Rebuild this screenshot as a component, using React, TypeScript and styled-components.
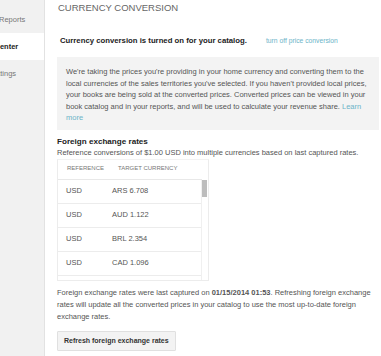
import React from 'react'
import styled, { createGlobalStyle } from 'styled-components'

type Rate = { code: string; value: string }

const rates: Rate[] = [
  { code: 'ARS', value: '6.708' },
  { code: 'AUD', value: '1.122' },
  { code: 'BRL', value: '2.354' },
  { code: 'CAD', value: '1.096' },
  { code: 'CHF', value: '0.908' },
  { code: 'CLP', value: '533.1' },
  { code: 'CNY', value: '6.051' },
  { code: 'COP', value: '1937' },
  { code: 'CZK', value: '20.14' },
  { code: 'DKK', value: '5.480' },
  { code: 'EUR', value: '0.735' },
  { code: 'GBP', value: '0.609' },
  { code: 'HKD', value: '7.755' },
  { code: 'HUF', value: '219.4' },
  { code: 'INR', value: '61.52' },
  { code: 'JPY', value: '104.5' },
  { code: 'KRW', value: '1062' },
  { code: 'MXN', value: '13.15' },
  { code: 'NOK', value: '6.152' },
  { code: 'NZD', value: '1.199' },
  { code: 'PLN', value: '3.064' },
  { code: 'RUB', value: '33.30' },
  { code: 'SEK', value: '6.500' },
  { code: 'TWD', value: '30.07' },
  { code: 'ZAR', value: '10.90' },
]

const GlobalStyle = createGlobalStyle`
  html, body {
    margin: 0;
    padding: 0;
    background: #fff;
  }
  body {
    font-family: "Liberation Sans", Arial, sans-serif;
    color: #444;
  }
`

const App = () => {
  return (
    <Page>
      <GlobalStyle />
      <Sidebar>
        <NavItem><NavLabel $shift={-1}>Reports</NavLabel></NavItem>
        <NavItem $active><NavLabel $shift={-5.5}>Center</NavLabel></NavItem>
        <NavItem><NavLabel $shift={-11}>Settings</NavLabel></NavItem>
      </Sidebar>
      <Main>
        <Title>CURRENCY CONVERSION</Title>
        <StatusRow>
          <Strong>Currency conversion is turned on for your catalog.</Strong>
          <SmallLink href="#">turn off price conversion</SmallLink>
        </StatusRow>
        <InfoBox>
          We're taking the prices you're providing in your home currency and converting them to the
          local currencies of the sales territories you've selected. If you haven't provided local prices,
          your books are being sold at the converted prices. Converted prices can be viewed in your
          book catalog and in your reports, and will be used to calculate your revenue share.{' '}
          <Link href="#">Learn more</Link>
        </InfoBox>
        <SectionTitle>Foreign exchange rates</SectionTitle>
        <Text>Reference conversions of $1.00 USD into multiple currencies based on last captured rates.</Text>
        <RatesBox>
          <HeadRow>
            <HeadCell $width={51}>REFERENCE</HeadCell>
            <HeadCell>TARGET CURRENCY</HeadCell>
          </HeadRow>
          <RowsScroll>
            {rates.map(r => (
              <RateRow key={r.code}>
                <Cell $width={46}>USD</Cell>
                <Cell>{r.code} {r.value}</Cell>
              </RateRow>
            ))}
          </RowsScroll>
          <ScrollThumb />
        </RatesBox>
        <Note>
          Foreign exchange rates were last captured on <b>01/15/2014 01:53</b>. Refreshing foreign exchange
          rates will update all the converted prices in your catalog to use the most up-to-date foreign
          exchange rates.
        </Note>
        <Button>Refresh foreign exchange rates</Button>
      </Main>
    </Page>
  )
}

const Page = styled.div`
  display: grid;
  grid-template-columns: 45px 1fr;
  width: 381px;
  height: 356px;
  overflow: hidden;
`

const Sidebar = styled.nav`
  background: #f1f1f1;
  border-right: 1px solid #e2e2e2;
  padding-top: 6px;
  overflow: hidden;
`

const NavItem = styled.div<{ $active?: boolean }>`
  height: 27px;
  display: flex;
  align-items: center;
  white-space: nowrap;
  font-size: 7.5px;
  background: ${p => (p.$active ? '#fff' : 'transparent')};
  color: ${p => (p.$active ? '#222' : '#777')};
  font-weight: ${p => (p.$active ? 'bold' : 'normal')};
`

const NavLabel = styled.span<{ $shift: number }>`
  margin-left: ${p => p.$shift}px;
`

const Main = styled.main`
  padding: 0 2px 0 12px;
  font-size: 7.5px;
  line-height: 11.5px;
`

const Title = styled.h1`
  margin: 2px 0 0 1px;
  font-size: 9.5px;
  line-height: 11px;
  font-weight: normal;
  color: #666;
`

const StatusRow = styled.div`
  display: flex;
  align-items: center;
  gap: 19px;
  margin: 22px 0 0 3px;
  height: 12px;
`

const Strong = styled.span`
  font-size: 7.75px;
  font-weight: bold;
  color: #222;
`

const Link = styled.a`
  color: #6cb4c8;
  text-decoration: none;
`

const SmallLink = styled(Link)`
  font-size: 6.75px;
`

const InfoBox = styled.div`
  margin-top: 10px;
  background: #f3f3f3;
  padding: 9px 8px 6px 9px;
  color: #555;
`

const SectionTitle = styled.h2`
  margin: 6px 0 0;
  font-size: 8.1px;
  line-height: 11.5px;
  font-weight: bold;
  color: #222;
`

const Text = styled.p`
  margin: 0;
  color: #555;
`

const RatesBox = styled.div`
  position: relative;
  width: 150px;
  border: 1px solid #ececec;
  border-top-color: #f2f2f2;
`

const HeadRow = styled.div`
  display: flex;
  align-items: center;
  height: 19px;
  padding-left: 9px;
  margin-right: 6px;
  border-bottom: 1px solid #e8e8e8;
  font-size: 6px;
  color: #777;
`

const HeadCell = styled.div<{ $width?: number }>`
  width: ${p => (p.$width ? `${p.$width}px` : 'auto')};
`

const RowsScroll = styled.div`
  height: 100px;
  margin-right: 6px;
  border-right: 1px solid #f0f0f0;
  overflow-y: auto;
  scrollbar-width: none;
`

const ScrollThumb = styled.div`
  position: absolute;
  top: 20px;
  right: 1px;
  width: 5px;
  height: 17px;
  background: #bdbdbd;
`

const RateRow = styled.div`
  display: flex;
  align-items: center;
  height: 23px;
  padding-left: 8px;
  border-bottom: 1px solid #ececec;
  color: #555;
`

const Cell = styled.div<{ $width?: number }>`
  width: ${p => (p.$width ? `${p.$width}px` : 'auto')};
`

const Note = styled.p`
  margin: 6px 0 0;
  color: #555;
  line-height: 12px;
`

const Button = styled.button`
  margin-top: 8px;
  height: 20px;
  padding: 0 6px;
  font-family: "Liberation Sans", Arial, sans-serif;
  font-size: 7px;
  font-weight: bold;
  color: #333;
  background: #f3f3f3;
  border: 1px solid #e0e0e0;
  border-radius: 1px;
`

export default App
